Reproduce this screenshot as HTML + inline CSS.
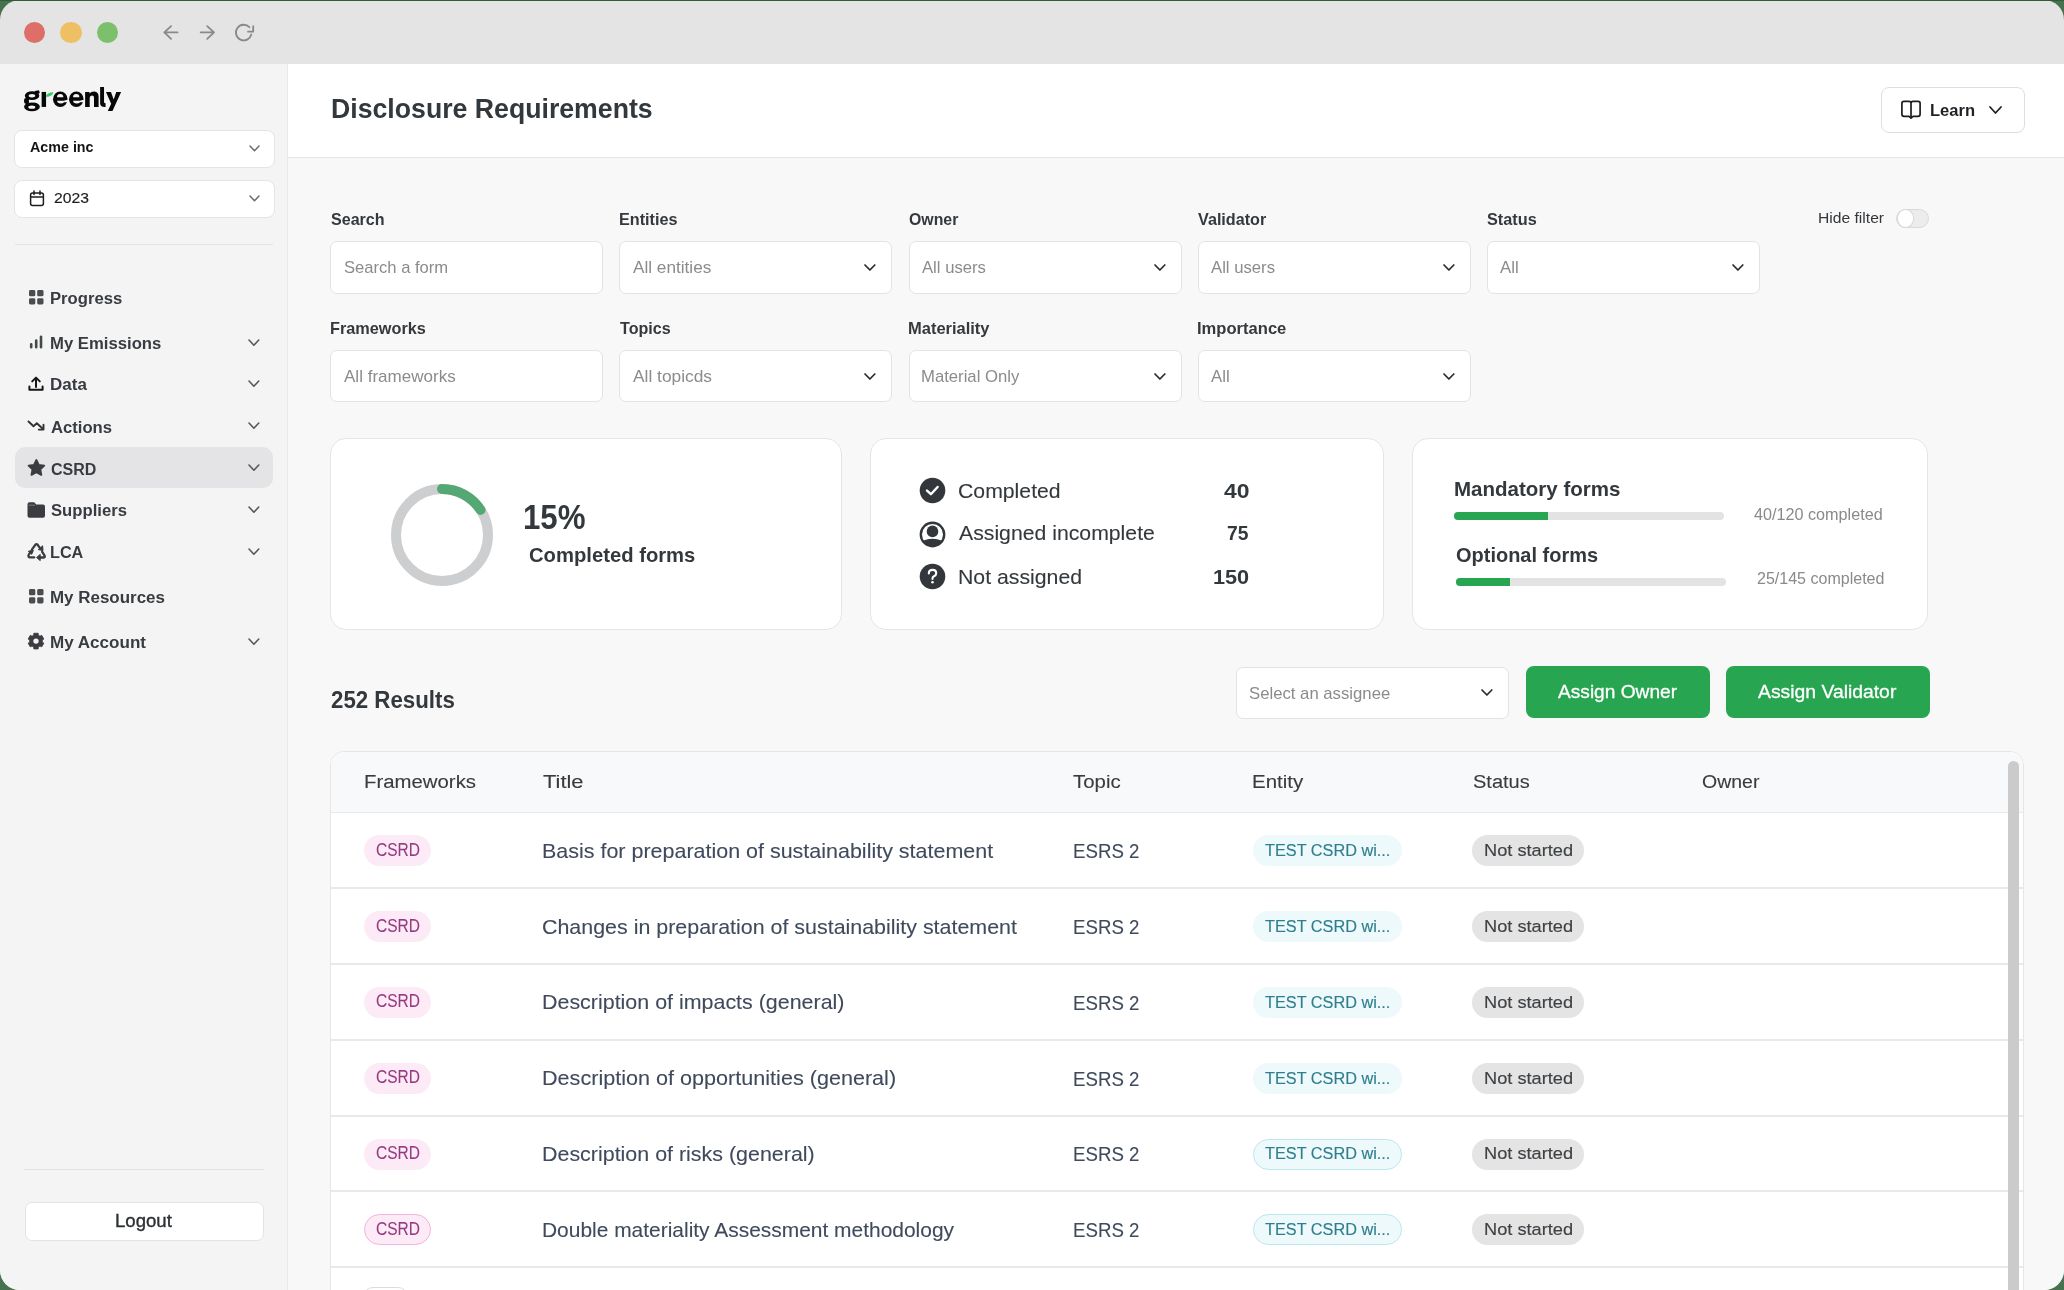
<!DOCTYPE html>
<html><head><meta charset="utf-8"><title>Disclosure Requirements</title>
<style>
html,body{margin:0;padding:0;}
body{width:2064px;height:1290px;overflow:hidden;background:#47724f;font-family:"Liberation Sans",sans-serif;position:relative;}
#win{will-change:transform;position:absolute;left:0;top:0;width:2064px;height:1290px;border-radius:20px;overflow:hidden;background:#e3e4e3;}
.t{position:absolute;white-space:nowrap;line-height:1;transform-origin:0 0;}
.b{position:absolute;}
</style></head><body>
<div id="win">
<div class="b" style="left:23.599999999999998px;top:21.8px;width:21.400000000000002px;height:21.400000000000002px;border-radius:50%;background:#dd6f68;"></div>
<div class="b" style="left:60.2px;top:21.8px;width:21.400000000000006px;height:21.400000000000002px;border-radius:50%;background:#efc063;"></div>
<div class="b" style="left:96.89999999999999px;top:21.8px;width:21.400000000000006px;height:21.400000000000002px;border-radius:50%;background:#7cc06b;"></div>
<svg class="b" style="left:160px;top:22px" width="22" height="22" viewBox="0 0 22 22"><path d="M17.5 10.4 H4.4 M11.1 4.1 L4.3 10.4 L11.1 16.9" fill="none" stroke="#868a8d" stroke-width="1.8" stroke-linecap="round" stroke-linejoin="round"/></svg>
<svg class="b" style="left:197px;top:22px" width="22" height="22" viewBox="0 0 22 22"><path d="M3.7 10.4 H16.9 M10.2 4.1 L17 10.4 L10.2 16.9" fill="none" stroke="#868a8d" stroke-width="1.8" stroke-linecap="round" stroke-linejoin="round"/></svg>
<svg class="b" style="left:233px;top:22px" width="24" height="22" viewBox="0 0 24 22"><path d="M18.3 12.4 A7.8 7.8 0 1 1 16.4 5.2" fill="none" stroke="#868a8d" stroke-width="1.8" stroke-linecap="round"/><path d="M20.2 3.4 V9.6 H14.3" fill="none" stroke="#868a8d" stroke-width="1.8" stroke-linecap="butt" stroke-linejoin="miter"/></svg>
<div class="b" style="left:0px;top:64px;width:287px;height:1226px;background:#f4f4f4;"></div>
<div class="b" style="left:287px;top:64px;width:1px;height:1226px;background:#e9e9e9;"></div>
<svg class="b" style="left:20px;top:82px" width="105" height="32" viewBox="0 0 2064 629"><g fill="#080808">
<ellipse cx="237" cy="268" rx="142" ry="88"/>
<path d="M290 178 L372 160 L388 205 L372 232 L300 222 Z"/>
<rect x="80" y="315" width="100" height="115" rx="40"/>
<ellipse cx="235" cy="487" rx="155" ry="90"/>
<rect x="425" y="195" width="87" height="295"/>
<ellipse cx="792" cy="338" rx="143" ry="153"/>
<ellipse cx="1107" cy="338" rx="143" ry="153"/>
<path d="M1280 490 V195 H1365 V228 Q1400 185 1462 188 Q1545 195 1545 292 V490 H1455 V310 Q1455 265 1415 265 Q1370 268 1370 312 V490 Z"/>
<path d="M1575 100 H1652 V398 Q1652 420 1682 420 V490 Q1575 498 1575 420 Z"/>
<path d="M1690 195 H1788 L1842 345 L1892 195 H1988 L1818 572 H1725 L1792 428 Z"/>
</g>
<g fill="#f4f4f4">
<ellipse cx="235" cy="272" rx="64" ry="34"/>
<path d="M175 356 H400 V398 Q300 396 175 402 Z"/>
<ellipse cx="232" cy="494" rx="68" ry="30"/>
<path d="M728 302 Q728 240 790 238 Q852 240 852 302 Z"/>
<path d="M728 370 H862 L950 345 V398 L868 400 Q845 424 795 424 Q735 422 728 370 Z"/>
<path d="M1043 302 Q1043 240 1105 238 Q1167 240 1167 302 Z"/>
<path d="M1043 370 H1177 L1265 345 V398 L1183 400 Q1160 424 1110 424 Q1050 422 1043 370 Z"/>
</g>
<path d="M508 294 Q508 215 655 198 Q645 290 508 294 Z" fill="#2fd160"/></svg>
<div class="b" style="left:14px;top:129.5px;width:261px;height:38.099999999999994px;background:#fff;border:1px solid #e4e4e4;border-radius:8px;box-sizing:border-box;"></div>
<div class="t" style="left:29.50px;top:139.20px;font-size:15.2px;color:#141414;font-weight:bold;transform:scaleX(0.9406);">Acme inc</div>
<svg class="b" style="left:247.7px;top:143.79999999999998px" width="13" height="8.8" viewBox="0 0 13 8.8"><path d="M2 2 L6.5 6.8 L11 2" fill="none" stroke="#6a6a6a" stroke-width="1.5" stroke-linecap="round" stroke-linejoin="round"/></svg>
<div class="b" style="left:14px;top:180.3px;width:261px;height:37.599999999999994px;background:#fff;border:1px solid #e4e4e4;border-radius:8px;box-sizing:border-box;"></div>
<svg class="b" style="left:29px;top:190px" width="16" height="17" viewBox="0 0 16 17"><rect x="1.6" y="3" width="12.8" height="12.4" rx="2" fill="none" stroke="#1d1d1d" stroke-width="1.5"/><path d="M1.6 7 H14.4 M5 1 V4.4 M11 1 V4.4" stroke="#1d1d1d" stroke-width="1.5" stroke-linecap="round"/></svg>
<div class="t" style="left:53.50px;top:189.50px;font-size:15.2px;color:#1d1d1d;transform:scaleX(1.0348);-webkit-text-stroke:0.15px #1d1d1d;">2023</div>
<svg class="b" style="left:247.7px;top:194.2px" width="13" height="8.8" viewBox="0 0 13 8.8"><path d="M2 2 L6.5 6.8 L11 2" fill="none" stroke="#6a6a6a" stroke-width="1.5" stroke-linecap="round" stroke-linejoin="round"/></svg>
<div class="b" style="left:15px;top:244px;width:258px;height:1.1999999999999886px;background:#e3e3e3;"></div>
<div class="b" style="left:15px;top:447.4px;width:258px;height:40.60000000000002px;background:#e4e4e6;border-radius:10px;"></div>
<div class="t" style="left:50.43px;top:290.00px;font-size:17.2px;color:#383c40;font-weight:bold;transform:scaleX(0.9691);">Progress</div>
<div class="t" style="left:50.43px;top:334.90px;font-size:17.2px;color:#383c40;font-weight:bold;transform:scaleX(0.9711);">My Emissions</div>
<svg class="b" style="left:247.1px;top:337.49999999999994px" width="13.8" height="9.2" viewBox="0 0 13.8 9.2"><path d="M2 2 L6.9 7.2 L11.8 2" fill="none" stroke="#55585b" stroke-width="1.6" stroke-linecap="round" stroke-linejoin="round"/></svg>
<div class="t" style="left:50.41px;top:376.40px;font-size:17.2px;color:#383c40;font-weight:bold;transform:scaleX(0.9892);">Data</div>
<svg class="b" style="left:247.1px;top:378.99999999999994px" width="13.8" height="9.2" viewBox="0 0 13.8 9.2"><path d="M2 2 L6.9 7.2 L11.8 2" fill="none" stroke="#55585b" stroke-width="1.6" stroke-linecap="round" stroke-linejoin="round"/></svg>
<div class="t" style="left:51.40px;top:418.60px;font-size:17.2px;color:#383c40;font-weight:bold;transform:scaleX(0.9685);">Actions</div>
<svg class="b" style="left:247.1px;top:421.2px" width="13.8" height="9.2" viewBox="0 0 13.8 9.2"><path d="M2 2 L6.9 7.2 L11.8 2" fill="none" stroke="#55585b" stroke-width="1.6" stroke-linecap="round" stroke-linejoin="round"/></svg>
<div class="t" style="left:51.40px;top:460.50px;font-size:17.2px;color:#383c40;font-weight:bold;transform:scaleX(0.9319);">CSRD</div>
<svg class="b" style="left:247.1px;top:463.09999999999997px" width="13.8" height="9.2" viewBox="0 0 13.8 9.2"><path d="M2 2 L6.9 7.2 L11.8 2" fill="none" stroke="#55585b" stroke-width="1.6" stroke-linecap="round" stroke-linejoin="round"/></svg>
<div class="t" style="left:51.40px;top:502.30px;font-size:17.2px;color:#383c40;font-weight:bold;transform:scaleX(0.9697);">Suppliers</div>
<svg class="b" style="left:247.1px;top:504.8999999999999px" width="13.8" height="9.2" viewBox="0 0 13.8 9.2"><path d="M2 2 L6.9 7.2 L11.8 2" fill="none" stroke="#55585b" stroke-width="1.6" stroke-linecap="round" stroke-linejoin="round"/></svg>
<div class="t" style="left:50.46px;top:544.20px;font-size:17.2px;color:#383c40;font-weight:bold;transform:scaleX(0.9436);">LCA</div>
<svg class="b" style="left:247.1px;top:546.8000000000001px" width="13.8" height="9.2" viewBox="0 0 13.8 9.2"><path d="M2 2 L6.9 7.2 L11.8 2" fill="none" stroke="#55585b" stroke-width="1.6" stroke-linecap="round" stroke-linejoin="round"/></svg>
<div class="t" style="left:50.41px;top:589.30px;font-size:17.2px;color:#383c40;font-weight:bold;transform:scaleX(0.9862);">My Resources</div>
<div class="t" style="left:50.41px;top:634.00px;font-size:17.2px;color:#383c40;font-weight:bold;transform:scaleX(0.9920);">My Account</div>
<svg class="b" style="left:247.1px;top:636.6px" width="13.8" height="9.2" viewBox="0 0 13.8 9.2"><path d="M2 2 L6.9 7.2 L11.8 2" fill="none" stroke="#55585b" stroke-width="1.6" stroke-linecap="round" stroke-linejoin="round"/></svg>
<svg class="b" style="left:28.8px;top:290px" width="15" height="15" viewBox="0 0 15 15"><rect x="0" y="0" width="6.3" height="6.3" rx="1.4" fill="#4a4d50"/><rect x="0" y="8.2" width="6.3" height="6.3" rx="1.4" fill="#4a4d50"/><rect x="8.2" y="0" width="6.3" height="6.3" rx="1.4" fill="#4a4d50"/><rect x="8.2" y="8.2" width="6.3" height="6.3" rx="1.4" fill="#4a4d50"/></svg>
<svg class="b" style="left:28px;top:334px" width="16" height="16" viewBox="0 0 16 16"><path d="M3.2 13.2 V10.2 M8.2 13.2 V6.6 M13 13.2 V2.8" stroke="#45484b" stroke-width="2.6" stroke-linecap="round"/></svg>
<svg class="b" style="left:27px;top:375px" width="18" height="18" viewBox="0 0 18 18"><path d="M9 12 V2.8 M5.2 6.4 L9 2.6 L12.8 6.4" fill="none" stroke="#151515" stroke-width="2" stroke-linecap="round" stroke-linejoin="round"/><path d="M2.4 11.6 V14.8 H15.6 V11.6" fill="none" stroke="#151515" stroke-width="2" stroke-linejoin="round" stroke-linecap="round"/></svg>
<svg class="b" style="left:27px;top:418px" width="19" height="15" viewBox="0 0 19 15"><path d="M1.5 3.5 L6.5 8.2 L9.8 5.2 L15.8 10.8" fill="none" stroke="#2f3235" stroke-width="1.9" stroke-linecap="round" stroke-linejoin="round"/><path d="M16.5 6.8 V11.6 H11.8" fill="none" stroke="#2f3235" stroke-width="1.9" stroke-linecap="round" stroke-linejoin="round"/></svg>
<svg class="b" style="left:26.5px;top:458px" width="19" height="19" viewBox="0 0 19 19"><path d="M9.4 2 L11.8 6.9 L17.2 7.6 L13.3 11.4 L14.3 16.8 L9.4 14.2 L4.5 16.8 L5.5 11.4 L1.6 7.6 L7 6.9 Z" fill="#3a3c40" stroke="#3a3c40" stroke-width="1.9" stroke-linejoin="round"/></svg>
<svg class="b" style="left:26.5px;top:501px" width="19" height="18" viewBox="0 0 19 18"><path d="M2.5 1.2 H7.2 L9.2 3.4 H16 A2 2 0 0 1 18 5.4 V14.8 A2 2 0 0 1 16 16.8 H2.5 A2 2 0 0 1 0.5 14.8 V3.2 A2 2 0 0 1 2.5 1.2 Z" fill="#3a3c40"/><path d="M1.6 4.2 H8" stroke="#8a8c8f" stroke-width="0.8"/></svg>
<svg class="b" style="left:26.5px;top:542.5px" width="19" height="19" viewBox="0 0 19 19"><g fill="none" stroke="#3a3c40" stroke-width="2.3" stroke-linecap="round" stroke-linejoin="round"><path d="M5 6.4 L8.3 1.8 Q9.5 0.6 10.7 1.8 L12.6 4.6"/><path d="M3.8 8.4 L1.6 12 Q0.9 14.3 3.2 14.4 H7.2"/><path d="M15.2 8.8 L17.6 12.6 Q18.3 14.4 16.2 14.5 H12.2"/></g><g fill="#3a3c40" stroke="#3a3c40" stroke-width="1" stroke-linejoin="round"><path d="M11.4 6.6 L15.6 2.8 L16 7.6 Z"/><path d="M1.4 8.2 L6.4 7.4 L4.6 11.4 Z"/><path d="M13.2 11.4 L9.6 14.5 L13.2 17.6 Z"/></g></svg>
<svg class="b" style="left:28.5px;top:589.2px" width="15" height="15" viewBox="0 0 15 15"><rect x="0" y="0" width="6.3" height="6.3" rx="1.4" fill="#4a4d50"/><rect x="0" y="8.2" width="6.3" height="6.3" rx="1.4" fill="#4a4d50"/><rect x="8.2" y="0" width="6.3" height="6.3" rx="1.4" fill="#4a4d50"/><rect x="8.2" y="8.2" width="6.3" height="6.3" rx="1.4" fill="#4a4d50"/></svg>
<svg class="b" style="left:27px;top:632px" width="18" height="18" viewBox="0 0 18 18"><path d="M6.84 1.29 L11.16 1.29 L11.22 3.20 L13.00 4.23 L14.68 3.33 L16.84 7.07 L15.22 8.07 L15.22 10.13 L16.84 11.13 L14.68 14.87 L13.00 13.97 L11.22 15.00 L11.16 16.91 L6.84 16.91 L6.78 15.00 L5.00 13.97 L3.32 14.87 L1.16 11.13 L2.78 10.13 L2.78 8.07 L1.16 7.07 L3.32 3.33 L5.00 4.23 L6.78 3.20 Z" fill="#3a3c40" stroke="#3a3c40" stroke-width="0.9" stroke-linejoin="round"/><circle cx="9" cy="9.1" r="2.7" fill="#f4f4f4"/></svg>
<div class="b" style="left:24px;top:1169.3px;width:240px;height:1.2000000000000455px;background:#e2e2e2;"></div>
<div class="b" style="left:24.5px;top:1202px;width:239.0px;height:38.5px;background:#fff;border:1px solid #e3e3e3;border-radius:7px;box-sizing:border-box;"></div>
<div class="t" style="left:115.24px;top:1213.20px;font-size:17.5px;color:#2c3033;transform:scaleX(1.0615);-webkit-text-stroke:0.35px #2c3033;">Logout</div>
<div class="b" style="left:288px;top:64px;width:1776px;height:93px;background:#fff;"></div>
<div class="b" style="left:288px;top:157px;width:1776px;height:1px;background:#e4e4e4;"></div>
<div class="b" style="left:288px;top:158px;width:1776px;height:1132px;background:#f8f8f8;"></div>
<div class="t" style="left:330.63px;top:95.00px;font-size:27.5px;color:#33383c;font-weight:bold;transform:scaleX(0.9699);">Disclosure Requirements</div>
<div class="b" style="left:1881px;top:87px;width:144px;height:46px;background:#fff;border:1px solid #dedede;border-radius:8px;box-sizing:border-box;"></div>
<svg class="b" style="left:1899px;top:99px" width="24" height="21" viewBox="0 0 24 21"><path d="M12 4.3 Q12 2.4 10 2.4 H4.9 Q2.9 2.4 2.9 4.4 V15.3 Q2.9 17.3 4.9 17.3 H10 L12 19.2 L14 17.3 H19.1 Q21.1 17.3 21.1 15.3 V4.4 Q21.1 2.4 19.1 2.4 H14 Q12 2.4 12 4.3 V17.8" fill="none" stroke="#1c1f22" stroke-width="1.7" stroke-linejoin="round" stroke-linecap="round"/></svg>
<div class="t" style="left:1929.94px;top:101.90px;font-size:17.2px;color:#1f2225;font-weight:bold;transform:scaleX(0.9624);">Learn</div>
<svg class="b" style="left:1987.9px;top:104.9px" width="15" height="10" viewBox="0 0 15 10"><path d="M2 2 L7.5 8 L13 2" fill="none" stroke="#1f2225" stroke-width="1.8" stroke-linecap="round" stroke-linejoin="round"/></svg>
<div class="t" style="left:330.50px;top:211.30px;font-size:16.4px;color:#35393d;font-weight:bold;transform:scaleX(0.9803);">Search</div>
<div class="b" style="left:330px;top:241px;width:273px;height:53px;background:#fff;border:1px solid #e3e3e3;border-radius:7px;box-sizing:border-box;"></div>
<div class="t" style="left:343.60px;top:259.30px;font-size:16.4px;color:#8b8b8b;transform:scaleX(1.0119);">Search a form</div>
<div class="t" style="left:618.51px;top:211.30px;font-size:16.4px;color:#35393d;font-weight:bold;transform:scaleX(0.9882);">Entities</div>
<div class="b" style="left:619px;top:241px;width:273px;height:53px;background:#fff;border:1px solid #e3e3e3;border-radius:7px;box-sizing:border-box;"></div>
<div class="t" style="left:632.60px;top:259.30px;font-size:16.4px;color:#8b8b8b;transform:scaleX(1.0482);">All entities</div>
<svg class="b" style="left:863.3000000000001px;top:263.1px" width="13.8" height="9.0" viewBox="0 0 13.8 9.0"><path d="M2 2 L6.9 7.0 L11.8 2" fill="none" stroke="#2a2b2d" stroke-width="1.75" stroke-linecap="round" stroke-linejoin="round"/></svg>
<div class="t" style="left:909.20px;top:211.30px;font-size:16.4px;color:#35393d;font-weight:bold;transform:scaleX(0.9666);">Owner</div>
<div class="b" style="left:908.5px;top:241px;width:273.0px;height:53px;background:#fff;border:1px solid #e3e3e3;border-radius:7px;box-sizing:border-box;"></div>
<div class="t" style="left:921.90px;top:259.30px;font-size:16.4px;color:#8b8b8b;transform:scaleX(1.0167);">All users</div>
<svg class="b" style="left:1152.8px;top:263.1px" width="13.8" height="9.0" viewBox="0 0 13.8 9.0"><path d="M2 2 L6.9 7.0 L11.8 2" fill="none" stroke="#2a2b2d" stroke-width="1.75" stroke-linecap="round" stroke-linejoin="round"/></svg>
<div class="t" style="left:1198.00px;top:211.30px;font-size:16.4px;color:#35393d;font-weight:bold;transform:scaleX(0.9864);">Validator</div>
<div class="b" style="left:1198px;top:241px;width:273px;height:53px;background:#fff;border:1px solid #e3e3e3;border-radius:7px;box-sizing:border-box;"></div>
<div class="t" style="left:1211.30px;top:259.30px;font-size:16.4px;color:#8b8b8b;transform:scaleX(1.0183);">All users</div>
<svg class="b" style="left:1442.3px;top:263.1px" width="13.8" height="9.0" viewBox="0 0 13.8 9.0"><path d="M2 2 L6.9 7.0 L11.8 2" fill="none" stroke="#2a2b2d" stroke-width="1.75" stroke-linecap="round" stroke-linejoin="round"/></svg>
<div class="t" style="left:1487.10px;top:211.30px;font-size:16.4px;color:#35393d;font-weight:bold;transform:scaleX(0.9925);">Status</div>
<div class="b" style="left:1487px;top:241px;width:273px;height:53px;background:#fff;border:1px solid #e3e3e3;border-radius:7px;box-sizing:border-box;"></div>
<div class="t" style="left:1500.30px;top:259.30px;font-size:16.4px;color:#8b8b8b;transform:scaleX(1.0242);">All</div>
<svg class="b" style="left:1731.3px;top:263.1px" width="13.8" height="9.0" viewBox="0 0 13.8 9.0"><path d="M2 2 L6.9 7.0 L11.8 2" fill="none" stroke="#2a2b2d" stroke-width="1.75" stroke-linecap="round" stroke-linejoin="round"/></svg>
<div class="t" style="left:329.51px;top:319.90px;font-size:16.4px;color:#35393d;font-weight:bold;transform:scaleX(0.9932);">Frameworks</div>
<div class="b" style="left:330px;top:350px;width:273px;height:52px;background:#fff;border:1px solid #e3e3e3;border-radius:7px;box-sizing:border-box;"></div>
<div class="t" style="left:343.60px;top:367.90px;font-size:16.4px;color:#8b8b8b;transform:scaleX(1.0394);">All frameworks</div>
<div class="t" style="left:619.50px;top:319.90px;font-size:16.4px;color:#35393d;font-weight:bold;transform:scaleX(0.9827);">Topics</div>
<div class="b" style="left:619px;top:350px;width:273px;height:52px;background:#fff;border:1px solid #e3e3e3;border-radius:7px;box-sizing:border-box;"></div>
<div class="t" style="left:632.60px;top:367.90px;font-size:16.4px;color:#8b8b8b;transform:scaleX(1.0576);">All topicds</div>
<svg class="b" style="left:863.3000000000001px;top:371.6px" width="13.8" height="9.0" viewBox="0 0 13.8 9.0"><path d="M2 2 L6.9 7.0 L11.8 2" fill="none" stroke="#2a2b2d" stroke-width="1.75" stroke-linecap="round" stroke-linejoin="round"/></svg>
<div class="t" style="left:908.19px;top:319.90px;font-size:16.4px;color:#35393d;font-weight:bold;transform:scaleX(1.0055);">Materiality</div>
<div class="b" style="left:908.5px;top:350px;width:273.0px;height:52px;background:#fff;border:1px solid #e3e3e3;border-radius:7px;box-sizing:border-box;"></div>
<div class="t" style="left:920.88px;top:367.90px;font-size:16.4px;color:#8b8b8b;transform:scaleX(1.0181);">Material Only</div>
<svg class="b" style="left:1152.8px;top:371.6px" width="13.8" height="9.0" viewBox="0 0 13.8 9.0"><path d="M2 2 L6.9 7.0 L11.8 2" fill="none" stroke="#2a2b2d" stroke-width="1.75" stroke-linecap="round" stroke-linejoin="round"/></svg>
<div class="t" style="left:1196.99px;top:319.90px;font-size:16.4px;color:#35393d;font-weight:bold;transform:scaleX(1.0111);">Importance</div>
<div class="b" style="left:1198px;top:350px;width:273px;height:52px;background:#fff;border:1px solid #e3e3e3;border-radius:7px;box-sizing:border-box;"></div>
<div class="t" style="left:1211.30px;top:367.90px;font-size:16.4px;color:#8b8b8b;transform:scaleX(1.0242);">All</div>
<svg class="b" style="left:1442.3px;top:371.6px" width="13.8" height="9.0" viewBox="0 0 13.8 9.0"><path d="M2 2 L6.9 7.0 L11.8 2" fill="none" stroke="#2a2b2d" stroke-width="1.75" stroke-linecap="round" stroke-linejoin="round"/></svg>
<div class="t" style="left:1818.09px;top:210.30px;font-size:15.5px;color:#35383b;transform:scaleX(1.0093);">Hide filter</div>
<div class="b" style="left:1896.3px;top:209px;width:32.700000000000045px;height:19px;background:#ececec;border:1px solid #dadada;border-radius:10px;box-sizing:border-box;"></div>
<div class="b" style="left:1896.5px;top:209.3px;width:17.5px;height:18.399999999999977px;background:#fff;border:1px solid #d6d6d6;border-radius:50%;box-sizing:border-box;"></div>
<div class="b" style="left:330px;top:438px;width:512px;height:192px;background:#fff;border:1px solid #e6e6e6;border-radius:16px;box-sizing:border-box;"></div>
<div class="b" style="left:870px;top:438px;width:514px;height:192px;background:#fff;border:1px solid #e6e6e6;border-radius:16px;box-sizing:border-box;"></div>
<div class="b" style="left:1412px;top:438px;width:516px;height:192px;background:#fff;border:1px solid #e6e6e6;border-radius:16px;box-sizing:border-box;"></div>
<svg class="b" style="left:382px;top:474.5px" width="120" height="120" viewBox="0 0 120 120"><circle cx="60" cy="60" r="46" fill="none" stroke="#cdcecf" stroke-width="10"/><path d="M60 14 A46 46 0 0 1 98.53 34.87" fill="none" stroke="#53a873" stroke-width="10" stroke-linecap="round"/></svg>
<div class="t" style="left:523.42px;top:498.67px;font-size:35px;color:#33383c;font-weight:bold;transform:scaleX(0.8921);">15%</div>
<div class="t" style="left:529.00px;top:544.42px;font-size:21px;color:#33383c;font-weight:bold;transform:scaleX(0.9633);">Completed forms</div>
<svg class="b" style="left:918.9px;top:477px" width="27" height="27" viewBox="0 0 27 27"><circle cx="13.5" cy="13.5" r="12.8" fill="#33373b"/><path d="M8 13.6 L11.9 17.2 L18.6 10" fill="none" stroke="#fff" stroke-width="2.4" stroke-linecap="round" stroke-linejoin="round"/></svg>
<svg class="b" style="left:918.9px;top:521px" width="27" height="27" viewBox="0 0 27 27"><defs><clipPath id="pc"><circle cx="13.5" cy="13.5" r="12"/></clipPath></defs><circle cx="13.5" cy="13.5" r="11.7" fill="none" stroke="#33373b" stroke-width="2.4"/><circle cx="13.5" cy="10.4" r="5.8" fill="#33373b"/><path d="M0 22 Q6 17.8 13.5 17.8 Q21 17.8 27 22 V28 H0 Z" fill="#33373b" clip-path="url(#pc)"/></svg>
<svg class="b" style="left:918.9px;top:563px" width="27" height="27" viewBox="0 0 27 27"><circle cx="13.5" cy="13.5" r="12.8" fill="#33373b"/><path d="M9.8 10.4 Q9.8 6.9 13.5 6.9 Q17.2 6.9 17.2 10.2 Q17.2 12.2 15 13.3 Q13.5 14.1 13.5 15.6 V16" fill="none" stroke="#fff" stroke-width="2.1" stroke-linecap="round" stroke-linejoin="round"/><circle cx="13.5" cy="19.3" r="1.3" fill="#fff"/></svg>
<div class="t" style="left:957.98px;top:481.00px;font-size:20.9px;color:#33383c;transform:scaleX(1.0160);-webkit-text-stroke:0.1px #33383c;">Completed</div>
<div class="t" style="left:1224.00px;top:481.00px;font-size:20.9px;color:#33383c;font-weight:bold;transform:scaleX(1.0965);">40</div>
<div class="t" style="left:959.00px;top:523.30px;font-size:20.9px;color:#33383c;transform:scaleX(1.0159);-webkit-text-stroke:0.1px #33383c;">Assigned incomplete</div>
<div class="t" style="left:1227.00px;top:523.30px;font-size:20.9px;color:#33383c;font-weight:bold;transform:scaleX(0.9230);">75</div>
<div class="t" style="left:957.98px;top:566.90px;font-size:20.9px;color:#33383c;transform:scaleX(1.0173);-webkit-text-stroke:0.1px #33383c;">Not assigned</div>
<div class="t" style="left:1213.26px;top:566.90px;font-size:20.9px;color:#33383c;font-weight:bold;transform:scaleX(1.0380);">150</div>
<div class="t" style="left:1453.51px;top:479.40px;font-size:20.8px;color:#33383c;font-weight:bold;transform:scaleX(0.9866);">Mandatory forms</div>
<div class="b" style="left:1454px;top:512.4px;width:270.4000000000001px;height:7.899999999999977px;background:#e3e3e3;border-radius:4px;"></div>
<div class="b" style="left:1454px;top:512.4px;width:93.79999999999995px;height:7.899999999999977px;background:#27a550;border-radius:4px 0 0 4px;"></div>
<div class="t" style="left:1754.20px;top:506.41px;font-size:17px;color:#8a8a8a;transform:scaleX(0.9518);">40/120 completed</div>
<div class="t" style="left:1456.30px;top:544.60px;font-size:20.8px;color:#33383c;font-weight:bold;transform:scaleX(0.9604);">Optional forms</div>
<div class="b" style="left:1455.7px;top:578.4px;width:270.29999999999995px;height:7.800000000000068px;background:#e3e3e3;border-radius:4px;"></div>
<div class="b" style="left:1455.7px;top:578.4px;width:54.200000000000045px;height:7.800000000000068px;background:#27a550;border-radius:4px 0 0 4px;"></div>
<div class="t" style="left:1756.50px;top:569.71px;font-size:17px;color:#8a8a8a;transform:scaleX(0.9428);">25/145 completed</div>
<div class="t" style="left:331.10px;top:688.63px;font-size:23px;color:#33383c;font-weight:bold;transform:scaleX(0.9689);">252 Results</div>
<div class="b" style="left:1236px;top:667px;width:273px;height:52px;background:#fff;border:1px solid #e3e3e3;border-radius:7px;box-sizing:border-box;"></div>
<div class="t" style="left:1249.40px;top:685.00px;font-size:16.4px;color:#8b8b8b;transform:scaleX(1.0196);">Select an assignee</div>
<svg class="b" style="left:1479.8999999999999px;top:688.0px" width="13.8" height="9.0" viewBox="0 0 13.8 9.0"><path d="M2 2 L6.9 7.0 L11.8 2" fill="none" stroke="#2a2b2d" stroke-width="1.75" stroke-linecap="round" stroke-linejoin="round"/></svg>
<div class="b" style="left:1526px;top:666px;width:184px;height:52px;background:#27a550;border-radius:8px;"></div>
<div class="t" style="left:1557.80px;top:682.12px;font-size:19px;color:#fff;transform:scaleX(1.0064);-webkit-text-stroke:0.3px #fff;">Assign Owner</div>
<div class="b" style="left:1726px;top:666px;width:204px;height:52px;background:#27a550;border-radius:8px;"></div>
<div class="t" style="left:1758.00px;top:682.12px;font-size:19px;color:#fff;transform:scaleX(1.0179);-webkit-text-stroke:0.3px #fff;">Assign Validator</div>
<div class="b" style="left:330px;top:751px;width:1694px;height:549px;background:#fff;border:1px solid #e6e6e6;border-radius:14px 14px 0 0;box-sizing:border-box;"></div>
<div class="b" style="left:331px;top:752px;width:1692px;height:60px;background:#f8f9fb;border-radius:13px 13px 0 0;"></div>
<div class="b" style="left:331px;top:812px;width:1692px;height:1px;background:#e8e9eb;"></div>
<div class="t" style="left:363.82px;top:772.90px;font-size:18.8px;color:#393c3f;transform:scaleX(1.0842);-webkit-text-stroke:0.12px #393c3f;">Frameworks</div>
<div class="t" style="left:543.20px;top:772.90px;font-size:18.8px;color:#393c3f;transform:scaleX(1.1649);-webkit-text-stroke:0.12px #393c3f;">Title</div>
<div class="t" style="left:1073.10px;top:772.90px;font-size:18.8px;color:#393c3f;transform:scaleX(1.0862);-webkit-text-stroke:0.12px #393c3f;">Topic</div>
<div class="t" style="left:1251.71px;top:772.90px;font-size:18.8px;color:#393c3f;transform:scaleX(1.0906);-webkit-text-stroke:0.12px #393c3f;">Entity</div>
<div class="t" style="left:1472.60px;top:772.90px;font-size:18.8px;color:#393c3f;transform:scaleX(1.0652);-webkit-text-stroke:0.12px #393c3f;">Status</div>
<div class="t" style="left:1701.60px;top:772.90px;font-size:18.8px;color:#393c3f;transform:scaleX(1.0370);-webkit-text-stroke:0.12px #393c3f;">Owner</div>
<div class="b" style="left:364px;top:835.2px;width:67px;height:31.0px;background:#fcebf6;border-radius:16px;"></div>
<div class="t" style="left:375.80px;top:841.80px;font-size:17.5px;color:#963a80;transform:scaleX(0.8846);-webkit-text-stroke:0.1px #963a80;">CSRD</div>
<div class="t" style="left:542.17px;top:840.70px;font-size:20.8px;color:#3f4a5c;transform:scaleX(1.0324);-webkit-text-stroke:0.1px #3f4a5c;">Basis for preparation of sustainability statement</div>
<div class="t" style="left:1073.11px;top:840.02px;font-size:21px;color:#3f4a5c;transform:scaleX(0.8888);-webkit-text-stroke:0.1px #3f4a5c;">ESRS 2</div>
<div class="b" style="left:1253px;top:835.2px;width:149.4000000000001px;height:31.0px;background:#eef9fb;border-radius:16px;"></div>
<div class="t" style="left:1265.20px;top:842.00px;font-size:17.4px;color:#2e7f8d;transform:scaleX(0.9358);-webkit-text-stroke:0.15px #2e7f8d;">TEST CSRD wi...</div>
<div class="b" style="left:1472.4px;top:835.2px;width:111.19999999999982px;height:31.0px;background:#e4e4e4;border-radius:16px;"></div>
<div class="t" style="left:1483.75px;top:842.00px;font-size:17.4px;color:#3f4245;transform:scaleX(1.0469);-webkit-text-stroke:0.15px #3f4245;">Not started</div>
<div class="b" style="left:331px;top:887.0px;width:1692px;height:2.0px;background:#e9e9e9;"></div>
<div class="b" style="left:364px;top:911.0400000000001px;width:67px;height:31.0px;background:#fcebf6;border-radius:16px;"></div>
<div class="t" style="left:375.80px;top:917.64px;font-size:17.5px;color:#963a80;transform:scaleX(0.8846);-webkit-text-stroke:0.1px #963a80;">CSRD</div>
<div class="t" style="left:542.17px;top:916.54px;font-size:20.8px;color:#3f4a5c;transform:scaleX(1.0296);-webkit-text-stroke:0.1px #3f4a5c;">Changes in preparation of sustainability statement</div>
<div class="t" style="left:1073.11px;top:915.86px;font-size:21px;color:#3f4a5c;transform:scaleX(0.8888);-webkit-text-stroke:0.1px #3f4a5c;">ESRS 2</div>
<div class="b" style="left:1253px;top:911.0400000000001px;width:149.4000000000001px;height:31.0px;background:#eef9fb;border-radius:16px;"></div>
<div class="t" style="left:1265.20px;top:917.84px;font-size:17.4px;color:#2e7f8d;transform:scaleX(0.9358);-webkit-text-stroke:0.15px #2e7f8d;">TEST CSRD wi...</div>
<div class="b" style="left:1472.4px;top:911.0400000000001px;width:111.19999999999982px;height:31.0px;background:#e4e4e4;border-radius:16px;"></div>
<div class="t" style="left:1483.75px;top:917.84px;font-size:17.4px;color:#3f4245;transform:scaleX(1.0469);-webkit-text-stroke:0.15px #3f4245;">Not started</div>
<div class="b" style="left:331px;top:962.84px;width:1692px;height:2.0px;background:#e9e9e9;"></div>
<div class="b" style="left:364px;top:986.88px;width:67px;height:31.0px;background:#fcebf6;border-radius:16px;"></div>
<div class="t" style="left:375.80px;top:993.48px;font-size:17.5px;color:#963a80;transform:scaleX(0.8846);-webkit-text-stroke:0.1px #963a80;">CSRD</div>
<div class="t" style="left:542.17px;top:992.38px;font-size:20.8px;color:#3f4a5c;transform:scaleX(1.0303);-webkit-text-stroke:0.1px #3f4a5c;">Description of impacts (general)</div>
<div class="t" style="left:1073.11px;top:991.70px;font-size:21px;color:#3f4a5c;transform:scaleX(0.8888);-webkit-text-stroke:0.1px #3f4a5c;">ESRS 2</div>
<div class="b" style="left:1253px;top:986.88px;width:149.4000000000001px;height:31.0px;background:#eef9fb;border-radius:16px;"></div>
<div class="t" style="left:1265.20px;top:993.68px;font-size:17.4px;color:#2e7f8d;transform:scaleX(0.9358);-webkit-text-stroke:0.15px #2e7f8d;">TEST CSRD wi...</div>
<div class="b" style="left:1472.4px;top:986.88px;width:111.19999999999982px;height:31.0px;background:#e4e4e4;border-radius:16px;"></div>
<div class="t" style="left:1483.75px;top:993.68px;font-size:17.4px;color:#3f4245;transform:scaleX(1.0469);-webkit-text-stroke:0.15px #3f4245;">Not started</div>
<div class="b" style="left:331px;top:1038.68px;width:1692px;height:2.0px;background:#e9e9e9;"></div>
<div class="b" style="left:364px;top:1062.72px;width:67px;height:31.0px;background:#fcebf6;border-radius:16px;"></div>
<div class="t" style="left:375.80px;top:1069.32px;font-size:17.5px;color:#963a80;transform:scaleX(0.8846);-webkit-text-stroke:0.1px #963a80;">CSRD</div>
<div class="t" style="left:542.16px;top:1068.22px;font-size:20.8px;color:#3f4a5c;transform:scaleX(1.0384);-webkit-text-stroke:0.1px #3f4a5c;">Description of opportunities (general)</div>
<div class="t" style="left:1073.11px;top:1067.54px;font-size:21px;color:#3f4a5c;transform:scaleX(0.8888);-webkit-text-stroke:0.1px #3f4a5c;">ESRS 2</div>
<div class="b" style="left:1253px;top:1062.72px;width:149.4000000000001px;height:31.0px;background:#eef9fb;border-radius:16px;"></div>
<div class="t" style="left:1265.20px;top:1069.52px;font-size:17.4px;color:#2e7f8d;transform:scaleX(0.9358);-webkit-text-stroke:0.15px #2e7f8d;">TEST CSRD wi...</div>
<div class="b" style="left:1472.4px;top:1062.72px;width:111.19999999999982px;height:31.0px;background:#e4e4e4;border-radius:16px;"></div>
<div class="t" style="left:1483.75px;top:1069.52px;font-size:17.4px;color:#3f4245;transform:scaleX(1.0469);-webkit-text-stroke:0.15px #3f4245;">Not started</div>
<div class="b" style="left:331px;top:1114.52px;width:1692px;height:2.0px;background:#e9e9e9;"></div>
<div class="b" style="left:364px;top:1138.56px;width:67px;height:31.0px;background:#fcebf6;border-radius:16px;"></div>
<div class="t" style="left:375.80px;top:1145.16px;font-size:17.5px;color:#963a80;transform:scaleX(0.8846);-webkit-text-stroke:0.1px #963a80;">CSRD</div>
<div class="t" style="left:542.17px;top:1144.06px;font-size:20.8px;color:#3f4a5c;transform:scaleX(1.0303);-webkit-text-stroke:0.1px #3f4a5c;">Description of risks (general)</div>
<div class="t" style="left:1073.11px;top:1143.38px;font-size:21px;color:#3f4a5c;transform:scaleX(0.8888);-webkit-text-stroke:0.1px #3f4a5c;">ESRS 2</div>
<div class="b" style="left:1253px;top:1138.56px;width:149.4000000000001px;height:31.0px;background:#eef9fb;border-radius:16px;border:1px solid #bce7f1;box-sizing:border-box;"></div>
<div class="t" style="left:1265.20px;top:1145.36px;font-size:17.4px;color:#2e7f8d;transform:scaleX(0.9358);-webkit-text-stroke:0.15px #2e7f8d;">TEST CSRD wi...</div>
<div class="b" style="left:1472.4px;top:1138.56px;width:111.19999999999982px;height:31.0px;background:#e4e4e4;border-radius:16px;"></div>
<div class="t" style="left:1483.75px;top:1145.36px;font-size:17.4px;color:#3f4245;transform:scaleX(1.0469);-webkit-text-stroke:0.15px #3f4245;">Not started</div>
<div class="b" style="left:331px;top:1190.3600000000001px;width:1692px;height:2.0px;background:#e9e9e9;"></div>
<div class="b" style="left:364px;top:1214.4px;width:67px;height:31.0px;background:#fcebf6;border-radius:16px;border:1px solid #f3b3dc;box-sizing:border-box;"></div>
<div class="t" style="left:375.80px;top:1221.00px;font-size:17.5px;color:#963a80;transform:scaleX(0.8846);-webkit-text-stroke:0.1px #963a80;">CSRD</div>
<div class="t" style="left:542.19px;top:1219.90px;font-size:20.8px;color:#3f4a5c;transform:scaleX(1.0069);-webkit-text-stroke:0.1px #3f4a5c;">Double materiality Assessment methodology</div>
<div class="t" style="left:1073.11px;top:1219.22px;font-size:21px;color:#3f4a5c;transform:scaleX(0.8888);-webkit-text-stroke:0.1px #3f4a5c;">ESRS 2</div>
<div class="b" style="left:1253px;top:1214.4px;width:149.4000000000001px;height:31.0px;background:#eef9fb;border-radius:16px;border:1px solid #bce7f1;box-sizing:border-box;"></div>
<div class="t" style="left:1265.20px;top:1221.20px;font-size:17.4px;color:#2e7f8d;transform:scaleX(0.9358);-webkit-text-stroke:0.15px #2e7f8d;">TEST CSRD wi...</div>
<div class="b" style="left:1472.4px;top:1214.4px;width:111.19999999999982px;height:31.0px;background:#e4e4e4;border-radius:16px;"></div>
<div class="t" style="left:1483.75px;top:1221.20px;font-size:17.4px;color:#3f4245;transform:scaleX(1.0469);-webkit-text-stroke:0.15px #3f4245;">Not started</div>
<div class="b" style="left:331px;top:1266.2px;width:1692px;height:2.0px;background:#e9e9e9;"></div>
<div class="b" style="left:363px;top:1287px;width:45px;height:33px;border:1px solid #dcdcdc;border-radius:10px;box-sizing:border-box;background:#fff;"></div>
<div class="b" style="left:2008px;top:760.5px;width:11px;height:539.5px;background:#cbcbcb;border-radius:5.5px 5.5px 0 0;"></div>
</div>
<div style="position:absolute;left:0;top:0;width:2064px;height:1px;background:#2f5d3a;"></div>
</body></html>
